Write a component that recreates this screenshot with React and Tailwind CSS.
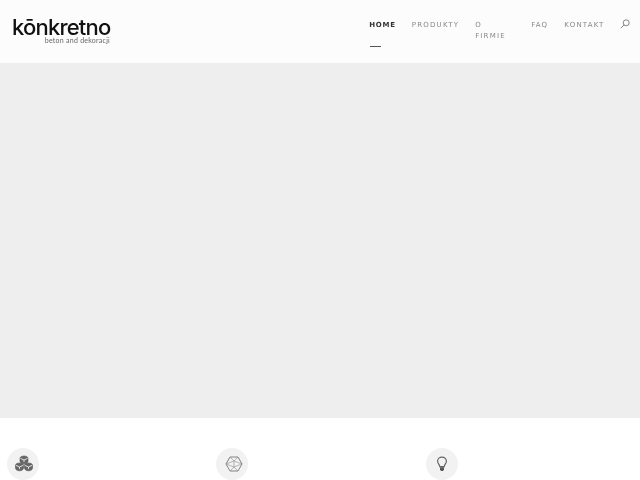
function NavItem({ label, active, wrap }) {
  return (
    <li className={wrap ? "w-[40px]" : "shrink-0"}>
      <a
        className={
          active
            ? "block text-[7px] leading-[11px] tracking-[0.75px] font-bold text-[#333]"
            : "block text-[7px] leading-[11px] tracking-[1.2px] text-[#888]"
        }
      >
        {label}
      </a>
      {active && <div className="mt-[15px] ml-[1px] w-[11px] h-px bg-[#555]"></div>}
    </li>
  );
}

function SearchIcon() {
  return (
    <svg className="ml-[15.5px] -mt-[1px]" width="10" height="10" viewBox="0 0 10 10" fill="none" stroke="#777" strokeWidth="0.9">
      <circle cx="6.2" cy="3.8" r="3" />
      <path d="M4 6 L0.8 9.2" />
    </svg>
  );
}

function CubesIcon() {
  return (
    <svg className="ml-[2px]" width="20" height="18" viewBox="0 0 20 18">
      <g fill="#666" stroke="#555" strokeWidth="0.6">
        <path d="M10 1 C12 1 14 1.8 14 3.4 V6 C14 7.8 12 8.8 10 8.8 C8 8.8 6 7.8 6 6 V3.4 C6 1.8 8 1 10 1 Z" />
        <path d="M5.5 8 C7.5 8 9.5 8.8 9.5 10.4 V13 C9.5 14.8 7.5 15.8 5.5 15.8 C3.5 15.8 1.5 14.8 1.5 13 V10.4 C1.5 8.8 3.5 8 5.5 8 Z" />
        <path d="M14.5 8 C16.5 8 18.5 8.8 18.5 10.4 V13 C18.5 14.8 16.5 15.8 14.5 15.8 C12.5 15.8 10.5 14.8 10.5 13 V10.4 C10.5 8.8 12.5 8 14.5 8 Z" />
      </g>
      <g fill="none" stroke="#eee" strokeWidth="0.9">
        <path d="M6.5 3.4 L10 5 L13.5 3.4 M10 5 V7" />
        <path d="M2 10.4 L5.5 12 L9 10.4 M5.5 12 V14" />
        <path d="M11 10.4 L14.5 12 L18 10.4 M14.5 12 V14" />
      </g>
    </svg>
  );
}

function MeshIcon() {
  return (
    <svg className="ml-[3px]" width="18" height="16" viewBox="0 0 18 16" fill="none" stroke="#999" strokeWidth="0.7">
      <path d="M5 1 H13 L17 8 L13 15 H5 L1 8 Z" stroke="#777" strokeWidth="0.9" />
      <path d="M5 1 L9 5 L13 1 M1 8 L9 5 L17 8 M5 15 L9 11 L13 15 M1 8 L9 11 L17 8 M9 5 V11 M5 1 L1 8 M13 1 L17 8" />
    </svg>
  );
}

function BulbIcon() {
  return (
    <svg width="12" height="16" viewBox="0 0 12 16" fill="none">
      <path d="M6 1.2 C3.2 1.2 1.6 3.2 1.6 5.2 C1.6 7.4 3.6 8.6 3.8 10.6 H8.2 C8.4 8.6 10.4 7.4 10.4 5.2 C10.4 3.2 8.8 1.2 6 1.2 Z" stroke="#666" strokeWidth="1.2" />
      <path d="M4 11.2 H8 V13.4 L7 15 H5 L4 13.4 Z" fill="#555" />
    </svg>
  );
}

function Feature({ children }) {
  return (
    <div className="w-[209.5px] shrink-0">
      <div className="w-[32px] h-[32px] rounded-full bg-[#f2f2f2] flex items-center justify-center">
        {children}
      </div>
    </div>
  );
}

export default function App() {
  return (
    <div className="h-screen overflow-hidden bg-white font-['DejaVu_Sans',sans-serif]">
      <header className="h-[63px] bg-[#fcfcfc] flex justify-between pl-[12px] pr-[10px] [will-change:transform]">
        <div className="w-[98px] pt-[18px] flex flex-col items-end">
          <div className="font-['Inter',sans-serif] font-medium text-[22px] leading-[19px] tracking-[-0.8px] text-[#111] whitespace-nowrap self-start">
            kōnkretno
          </div>
          <div className="font-['Lato',sans-serif] text-[7px] leading-[7px] tracking-[0.25px] text-[#666] whitespace-nowrap">
            beton and dekoracji
          </div>
        </div>
        <nav className="flex pt-[20px]">
          <ul className="flex gap-[16px] items-start">
            <NavItem label="HOME" active />
            <NavItem label="PRODUKTY" />
            <NavItem label="O FIRMIE" wrap />
            <NavItem label="FAQ" />
            <NavItem label="KONTAKT" />
          </ul>
          <SearchIcon />
        </nav>
      </header>
      <main className="h-[355px] bg-[#eeeeee]"></main>
      <section className="flex pl-[6.6px] pt-[30px]">
        <Feature><CubesIcon /></Feature>
        <Feature><MeshIcon /></Feature>
        <Feature><BulbIcon /></Feature>
      </section>
    </div>
  );
}
